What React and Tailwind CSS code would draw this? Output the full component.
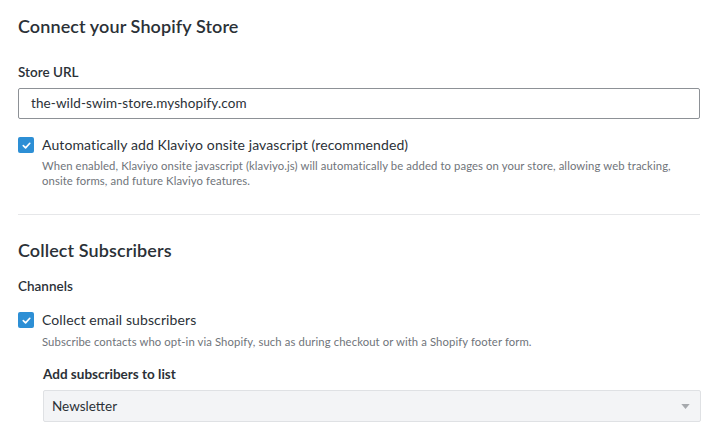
import React from "react";

const Check = () => (
  <span className="flex items-center justify-center w-4 h-4 rounded-[2px] bg-[#2d8fd5] shrink-0">
    <svg viewBox="0 0 12 12" className="w-[11px] h-[11px]" fill="none">
      <path d="M2.5 6.2 L5 8.6 L9.6 3.6" stroke="white" strokeWidth="1.8" strokeLinecap="round" strokeLinejoin="round" />
    </svg>
  </span>
);

const App = () => {
  return (
    <div className="w-[721px] h-[438px] bg-white overflow-hidden font-['Lato',sans-serif] text-[#2b3137] px-[18px] pt-[15px]">
      {/* Connect store */}
      <h1 className="text-[18px] font-semibold leading-[22px] tracking-[0.1px]">Connect your Shopify Store</h1>
      <div className="mt-[27px] text-[13.5px] font-semibold leading-[16px]">Store URL</div>
      <div className="mt-[8px] w-[682px] h-[31px] border border-[#8d9196] rounded-[2px] flex items-center pl-3 text-[13.5px] tracking-[0.1px] text-[#2b3137]">
        the-wild-swim-store.myshopify.com
      </div>
      <div className="mt-[18px] flex items-center gap-[8px]">
        <Check />
        <span className="text-[14px] leading-[16px] tracking-[0.1px]">Automatically add Klaviyo onsite javascript (recommended)</span>
      </div>
      <p className="mt-[5px] ml-[24px] text-[11.3px] leading-[15px] text-[#6f747a] tracking-[0.1px] pr-1">
        When enabled, Klaviyo onsite javascript (klaviyo.js) will automatically be added to pages on your store, allowing web tracking, onsite forms, and future Klaviyo features.
      </p>
      <div className="mt-[26px] w-[682px] border-t border-[#e6e7e9]"></div>

      {/* Collect subscribers */}
      <h2 className="mt-[24px] text-[18px] font-semibold leading-[22px] tracking-[0.1px]">Collect Subscribers</h2>
      <div className="mt-[17px] text-[13.5px] font-semibold leading-[16px]">Channels</div>
      <div className="mt-[18px] flex items-center gap-[8px]">
        <Check />
        <span className="text-[14px] leading-[16px] tracking-[0.1px]">Collect email subscribers</span>
      </div>
      <p className="mt-[6px] ml-[24px] text-[11.3px] leading-[15px] text-[#6f747a] tracking-[0.1px]">
        Subscribe contacts who opt-in via Shopify, such as during checkout or with a Shopify footer form.
      </p>
      <div className="ml-[25px]">
        <div className="mt-[17px] text-[13.5px] font-bold leading-[16px]">Add subscribers to list</div>
        <div className="mt-[8px] w-[658px] h-[32px] bg-[#f3f4f6] border border-[#dfe1e4] rounded-[2px] flex items-center justify-between pl-[8px] pr-[10px] text-[13.5px]">
          <span>Newsletter</span>
          <svg viewBox="0 0 10 6" className="w-[9px] h-[5px]">
            <path d="M0 0 H10 L5 6 Z" fill="#a6a9ad" />
          </svg>
        </div>
      </div>
    </div>
  );
};

export default App;
